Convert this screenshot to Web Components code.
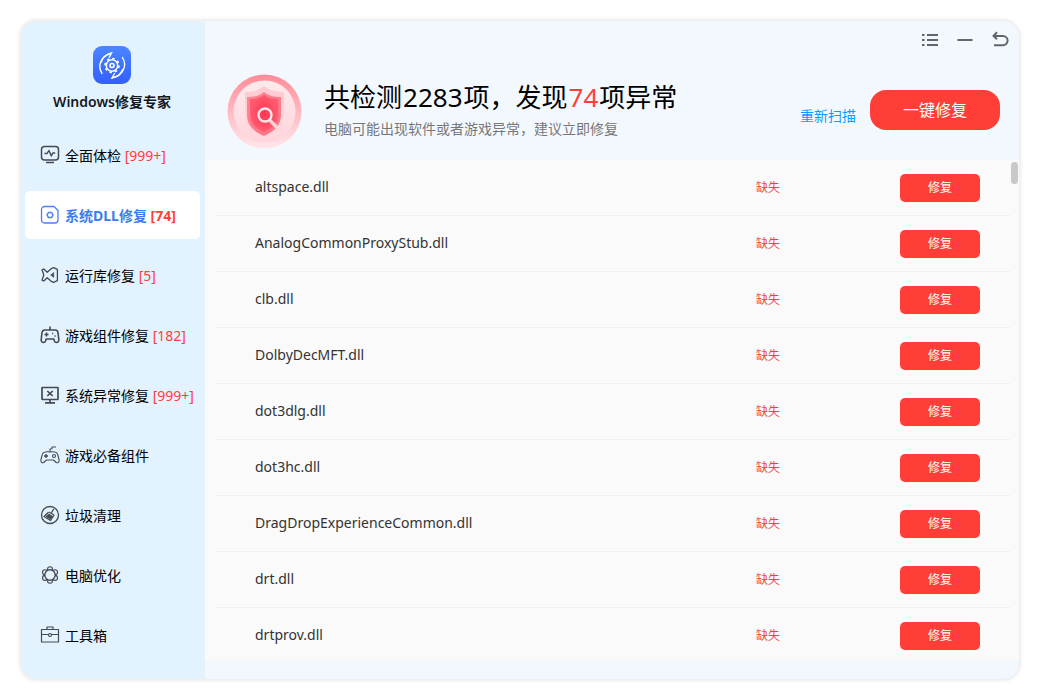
<!DOCTYPE html>
<html lang="zh-CN">
<head>
<meta charset="utf-8">
<meta name="viewport" content="width=device-width, initial-scale=1">
<title>Windows修复专家</title>
<style>
  html, body { margin: 0; height: 100%; background: #fff; }
  body {
    font-family: "Noto Sans", "Noto Sans CJK SC", sans-serif;
    font-size: 14px; line-height: 20px; color: #000;
    --red: #ff3f37; --blue: #3d7cf0; --link: #0a9cff;
  }
</style>
</head>
<body>
<repair-app></repair-app>

<script>
const ICONS = {
  check: '<rect x="1.5" y="1.5" width="17" height="13.5" rx="3"/><path d="M4.5 8.5h2.6l1.8-3 2.4 5.4 1.5-2.9h2.4" stroke-width="1.4"/><path d="M6 17.5h8" stroke-width="1.7"/>',
  dll: '<path d="M4.500 1.500h9.500l4 4v9.500a3 3 0 0 1-3 3H4.500a3 3 0 0 1-3-3V4.500a3 3 0 0 1 3-3z" stroke-width="1.300"/><path d="M8.500 7.400h3l1.500 2.600-1.500 2.600h-3L7 10z" stroke-width="1.500"/>',
  runtime: '<path d="M2 4.800l1.800-.8 3.400 3.300 4.600-4 1.800-.6 3.800 1.600v11.400l-3.800 1.600-1.800-.6-4.600-4L3.800 16 2 15.200l1.800-5.200z" stroke-width="1.300"/><path d="M13.700 7.500v5L10.700 10z" fill="currentColor" stroke-width=".6"/>',
  pad: '<path d="M10 1.500v3.500M5 5h10a3 3 0 0 1 3 2.700l.8 7c.2 1.800-1 2.800-2.300 2.800s-1.900-.8-2.200-1.800L13.900 14H6.100l-.4 1.700c-.3 1-.9 1.800-2.200 1.800s-2.500-1-2.300-2.800l.8-7A3 3 0 0 1 5 5z" stroke-width="1.600"/><path d="M4.500 9.500h4M6.500 7.500v4" stroke-width="1.500"/><path d="M12 8.500h1.200M14.500 11h1.200" stroke-width="1.500"/>',
  error: '<rect x="2" y="2.500" width="16" height="12" rx=".5" stroke-width="1.700"/><path d="M7.300 6l5.400 5M12.700 6l-5.400 5M10 14.500v3M5 17.800h10" stroke-width="1.700"/>',
  joystick: '<path d="M10 7V4l2-.2V2h4M5.500 7c1.500-.8 2.800 0 4.500 0s3-.8 4.500 0c2 0 3 1.500 3.500 3.500l1 4c.6 3-1.200 3.800-2.800 3L13.500 15h-7l-2.700 2.500c-1.600.8-3.400 0-2.800-3l1-4C2.500 8.500 3.500 7 5.500 7z" stroke-width="1.100"/><path d="M4 11h4M6 9v4" stroke-width="1.400"/><circle cx="14" cy="11" r="1.500" stroke-width="1.100"/>',
  clean: '<circle cx="10" cy="10" r="8.500" stroke-width="1.300"/><path d="M13.800 4l-2.300 3.700M9 7l5.300 3.200M8.500 7.300L4 11.500l6.500 4 3.500-5.300" stroke-width="1.300"/><path d="M8.800 9l3.600 2.200-2 3L6 11.500z" fill="currentColor" stroke-width=".8"/>',
  tune: '<g stroke-width="1.100"><circle cx="10" cy="4.300" r="2.500"/><circle cx="15" cy="7.200" r="2.500"/><circle cx="15" cy="12.900" r="2.500"/><circle cx="10" cy="15.700" r="2.500"/><circle cx="5" cy="12.900" r="2.500"/><circle cx="5" cy="7.200" r="2.500"/><circle cx="10" cy="10" r="5.200" fill="#e3f2ff" stroke-width="1.400"/></g>',
  toolbox: '<path d="M1.500 4.500h17v12.500h-17zM1.500 9.500h7M11.500 9.500h7M7 4.500V2h6v2.500" stroke-width="1.200"/><circle cx="10" cy="10" r="1.500" stroke-width="1.200"/>',
};

const NAV = [
  ['check', '全面体检', '999+'],
  ['dll', '系统DLL修复', '74'],
  ['runtime', '运行库修复', '5'],
  ['pad', '游戏组件修复', '182'],
  ['error', '系统异常修复', '999+'],
  ['joystick', '游戏必备组件', ''],
  ['clean', '垃圾清理', ''],
  ['tune', '电脑优化', ''],
  ['toolbox', '工具箱', ''],
];

const FILES = ['altspace.dll', 'AnalogCommonProxyStub.dll', 'clb.dll', 'DolbyDecMFT.dll',
  'dot3dlg.dll', 'dot3hc.dll', 'DragDropExperienceCommon.dll', 'drt.dll', 'drtprov.dll'];

class Base extends HTMLElement {
  connectedCallback() {
    if (this.shadowRoot) return;
    this.attachShadow({ mode: 'open' }).innerHTML = this.render();
  }
}

customElements.define('nav-item', class extends Base {
  render() {
    return `<style>
      :host { display: block; }
      a { display: flex; align-items: center; height: 48px; padding-left: 15px; gap: 5px;
          border-radius: 5px; color: #000; text-decoration: none; white-space: nowrap; }
      svg { width: 20px; height: 20px; flex: none; color: #454a50; }
      .label { padding-top: 2px; }
      b { font-weight: 400; color: var(--red); }
      :host([active]) a { background: #fff; color: var(--blue); font-weight: 700; }
      :host([active]) svg { color: #4c7ff5; }
      :host([active]) b { font-weight: 700; }
    </style>
    <a href="#${this.getAttribute('icon')}"><svg viewBox="0 0 20 20" fill="none" stroke="currentColor" stroke-width="1.5" stroke-linejoin="round" aria-hidden="true">${ICONS[this.getAttribute('icon')]}</svg>
    <span class="label"><slot></slot> <b><slot name="count"></slot></b></span></a>`;
  }
});

customElements.define('app-sidebar', class extends Base {
  render() {
    return `<style>
      :host { display: flex; flex-direction: column; background: #e3f2ff; }
      .brand { display: flex; flex-direction: column; align-items: center; gap: 8px; padding: 25px 2px 0 0; }
      .brand svg { width: 38px; height: 38px; }
      h1 { margin: 0; font-size: 14px; line-height: 20px; font-weight: 600; color: #15181d; }
      nav { display: flex; flex-direction: column; gap: 12px; padding: 19px 5px 0 4px; }
    </style>
    <div class="brand">
      <svg viewBox="0 0 38 38" fill="none" stroke="#fff" stroke-linecap="round" aria-hidden="true">
        <defs><linearGradient id="g" x1="0" y1="0" x2="0" y2="1"><stop stop-color="#4b86ff"/><stop offset="1" stop-color="#335eff"/></linearGradient></defs>
        <rect width="38" height="38" rx="9" fill="url(#g)" stroke="none"/>
        <path d="M9 27.500C4.500 20 7 10.500 18.500 7l-2.300 4.500" stroke-width="1.400"/>
        <path d="M18.500 7c-6 1.500-9.500 5.500-10 9" stroke-width="1.200"/>
        <path d="M29.500 11.500C34.500 19.500 30 30 19 32l2.500-4.500" stroke-width="1.400"/>
        <path d="M19 32c5.500-1.200 9-4.500 10.500-8.500" stroke-width="1.200"/>
        <circle cx="19" cy="19.500" r="5.700" stroke-width="1.500"/>
        <circle cx="19" cy="19.500" r="7" stroke-width="1.600" stroke-linecap="butt" stroke-dasharray="2.500 2.998"/>
        <circle cx="19" cy="19.500" r="2" stroke-width="1.700"/>
      </svg>
      <h1>Windows修复专家</h1>
    </div>
    <nav>${NAV.map(([i, t, n], k) => `<nav-item icon="${i}"${k === 1 ? ' active' : ''}>${t}${n ? `<span slot="count">[${n}]</span>` : ''}</nav-item>`).join('')}</nav>`;
  }
});

customElements.define('window-controls', class extends Base {
  render() {
    return `<style>
      :host { display: flex; justify-content: flex-end; gap: 15px; padding: 9px 9px 0 0; }
      button { display: block; width: 20px; height: 20px; padding: 0; border: 0; background: none; color: #62666b; }
      svg { display: block; width: 20px; height: 20px; }
    </style>
    <button aria-label="菜单"><svg viewBox="0 0 20 20" fill="none" stroke="currentColor" stroke-width="2"><path d="M2 5h2.500M7 5h11M2 10h2.500M7 10h11M2 15h2.500M7 15h11"/></svg></button>
    <button aria-label="最小化"><svg viewBox="0 0 20 20" fill="none" stroke="currentColor" stroke-width="2"><path d="M2.500 10h15"/></svg></button>
    <button aria-label="返回"><svg viewBox="0 0 20 20" fill="none" stroke="currentColor" stroke-width="2"><path d="M3.500 6H13a4.600 4.600 0 0 1 0 9.200H4M7 2.200L3.500 6 7 9.300"/></svg></button>`;
  }
});

customElements.define('scan-summary', class extends Base {
  render() {
    return `<style>
      :host { display: flex; align-items: flex-start; padding: 0 19px 0 22px; }
      .badge { width: 75px; height: 75px; flex: none; margin-top: 3px; }
      .text { flex: 1; padding: 8px 0 0 22px; min-width: 0; white-space: nowrap; }
      h2 { display: flex; gap: 1px; margin: 0; font-size: 26px; line-height: 36px; font-weight: 400; }
      em { font-style: normal; color: var(--red); }
      p { margin: 4px 0 0; color: #777; }
      a { color: var(--link); margin: 35px 14px 0 0; text-decoration: none; }
      button { width: 130px; height: 40px; margin-top: 19px; padding: 0; border: 0; border-radius: 16px;
        background: var(--red); color: #fff; font: inherit; font-size: 16px; }
    </style>
    <svg class="badge" viewBox="0 0 75 75" aria-hidden="true">
      <defs>
        <linearGradient id="r" x1="0" y1="0" x2="0" y2="1"><stop stop-color="#ff8b97"/><stop offset="1" stop-color="#ffe7ec"/></linearGradient>
        <linearGradient id="i" x1="0" y1="0" x2="0" y2="1"><stop stop-color="#ffe9ec"/><stop offset="1" stop-color="#ffd5dc"/></linearGradient>
        <linearGradient id="s" x1="0" y1="0" x2="0" y2="1"><stop stop-color="#ffb8c2"/><stop offset="1" stop-color="#ffd9df"/></linearGradient>
        <linearGradient id="c" x1="0" y1="0" x2="1" y2="1"><stop stop-color="#ff8593"/><stop offset="1" stop-color="#ff7083"/></linearGradient>
        <radialGradient id="f"><stop stop-color="#ff3552"/><stop offset="1" stop-color="#ff5b70"/></radialGradient>
      </defs>
      <circle cx="37.500" cy="37.500" r="37" fill="url(#r)"/>
      <circle cx="37.500" cy="37.500" r="31" fill="url(#i)"/>
      <path d="M37 12c6 5 12 6 20 6v19c0 14-7 21-20 27-13-6-19-13-19-27V18c8 0 13-1 19-6z" fill="url(#s)" opacity=".65"/>
      <path d="M37 18c5 4 10 5 17 5v17c0 11-6 17-17 22-11-5-17-11-17-22V23c7 0 12-1 17-5z" fill="url(#c)"/>
      <path d="M37 21c4 3 9 4 14 4v14c0 10-5 15-14 19-9-4-14-9-14-19V25c5 0 10-1 14-4z" fill="url(#f)"/>
      <path d="M43 46.500l10.500 10.500" stroke="#ffd3da" stroke-width="3.500" stroke-linecap="round"/>
      <circle cx="38" cy="41" r="6.500" fill="none" stroke="#ffe4e8" stroke-width="2.400"/>
    </svg>
    <div class="text">
      <h2><span>共检测</span><span>2283</span><span>项，发现</span><em>74</em><span>项异常</span></h2>
      <p>电脑可能出现软件或者游戏异常，建议立即修复</p>
    </div>
    <a href="#rescan">重新扫描</a>
    <button>一键修复</button>`;
  }
});

customElements.define('file-list', class extends Base {
  render() {
    return `<style>
      :host { display: flex; background: #fafafa; padding-left: 10px; overflow: hidden; }
      table { flex: 1; align-self: flex-start; border-collapse: separate; border-spacing: 0; table-layout: fixed; }
      td { height: 55px; padding: 0; border-bottom: 1px solid #f0f0f0; }
      td.name { height: 53px; padding: 0 0 2px 40px; color: #333; }
      .state { width: 144px; color: var(--red); font-size: 12px; }
      .act { width: 110px; }
      button { display: block; width: 80px; height: 28px; padding: 0; border: 0; border-radius: 5px;
        background: var(--red); color: #fff; font: inherit; font-size: 12px; }
      .rail { width: 9px; padding-top: 2px; }
      .thumb { width: 7px; height: 22px; margin-left: 1px; border-radius: 4px; background: #c8c8c8; }
    </style>
    <table><tbody>${FILES.map(f => `<tr><td class="name">${f}</td><td class="state">缺失</td><td class="act"><button aria-label="修复 ${f}">修复</button></td></tr>`).join('')}</tbody></table>
    <div class="rail"><div class="thumb"></div></div>`;
  }
});

customElements.define('repair-app', class extends Base {
  render() {
    return `<style>
      :host { display: block; height: 100%; box-sizing: border-box; padding: 20px; }
      .window { display: grid; grid-template: minmax(0, 1fr) / 184px minmax(0, 1fr); height: 100%; box-sizing: border-box;
        border: 1px solid #efefef; border-radius: 17px; overflow: hidden; background: #f3f8ff;
        box-shadow: 0 0 4px rgba(0, 0, 0, .12); }
      main { display: grid; grid-template-rows: 50px 89px minmax(0, 1fr) 19px; min-width: 0; }
    </style>
    <div class="window">
      <app-sidebar></app-sidebar>
      <main>
        <window-controls></window-controls>
        <scan-summary></scan-summary>
        <file-list></file-list>
      </main>
    </div>`;
  }
});
</script>
</body>
</html>
